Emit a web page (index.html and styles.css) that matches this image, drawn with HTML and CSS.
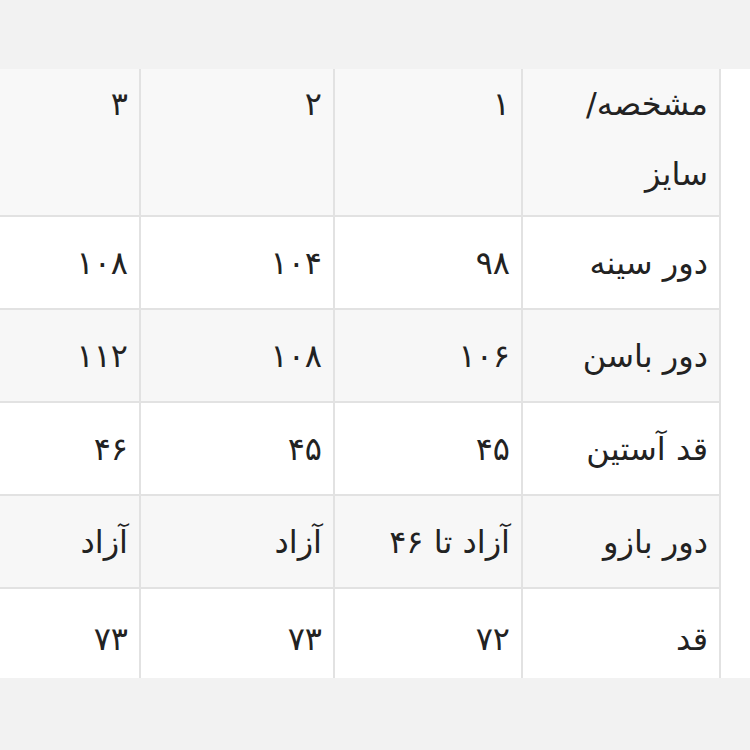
FILE: index.html
```html
<!DOCTYPE html>
<html lang="fa" dir="rtl">
<head>
<meta charset="utf-8">
<link rel="stylesheet" href="styles.css">
</head>
<body>
<div class="sheet">
  <table class="sizes">
    <colgroup>
      <col class="c-label"><col class="c-1"><col class="c-2"><col class="c-3">
    </colgroup>
    <tr class="head">
      <td>مشخصه/<br>سایز</td><td>۱</td><td>۲</td><td>۳</td>
    </tr>
    <tr class="row">
      <td>دور سینه</td><td>۹۸</td><td>۱۰۴</td><td>۱۰۸</td>
    </tr>
    <tr class="row alt">
      <td>دور باسن</td><td>۱۰۶</td><td>۱۰۸</td><td>۱۱۲</td>
    </tr>
    <tr class="row">
      <td>قد آستین</td><td>۴۵</td><td>۴۵</td><td>۴۶</td>
    </tr>
    <tr class="row alt">
      <td>دور بازو</td><td>آزاد تا ۴۶</td><td>آزاد</td><td>آزاد</td>
    </tr>
    <tr class="row last">
      <td>قد</td><td>۷۲</td><td>۷۳</td><td>۷۳</td>
    </tr>
  </table>
</div>
</body>
</html>
```
FILE: styles.css
```css
html, body {
  margin: 0;
  padding: 0;
  background: #f2f2f2;
}
body {
  width: 750px;
  height: 750px;
  overflow: hidden;
  font-family: "DejaVu Sans", sans-serif;
  color: #222;
}
.sheet {
  margin-top: 69px;
  height: 609px;
  overflow: hidden;
  background: #fff;
  padding-right: 29px;
}
.sizes {
  border-collapse: collapse;
  table-layout: fixed;
  width: 721px;
  font-size: 32px;
}
.c-label { width: 198px; }
.c-1 { width: 188px; }
.c-2 { width: 194px; }
.c-3 { width: 141px; }
.sizes td {
  border: 2px solid #e2e2e2;
  border-top: none;
  text-align: right;
  padding: 0 11px;
  vertical-align: middle;
}
.sizes td:last-child {
  border-left: none;
}
.head td {
  background: #f8f8f8;
  height: 146px;
  line-height: 70px;
  vertical-align: top;
  padding-top: 0;
}
.row td {
  height: 91px;
  line-height: 40px;
}
.alt td {
  background: #f7f7f7;
}
.last td {
  height: 100px;
}
```
